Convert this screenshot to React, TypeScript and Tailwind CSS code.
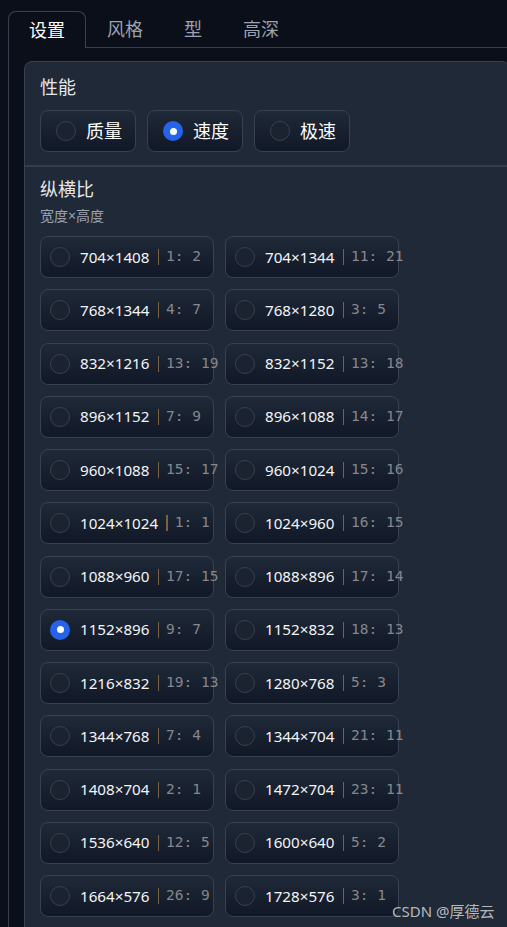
import React from "react";

const ratios: [string, string, boolean?][] = [
  ["704×1408", "1: 2"],
  ["704×1344", "11: 21"],
  ["768×1344", "4: 7"],
  ["768×1280", "3: 5"],
  ["832×1216", "13: 19"],
  ["832×1152", "13: 18"],
  ["896×1152", "7: 9"],
  ["896×1088", "14: 17"],
  ["960×1088", "15: 17"],
  ["960×1024", "15: 16"],
  ["1024×1024", "1: 1"],
  ["1024×960", "16: 15"],
  ["1088×960", "17: 15"],
  ["1088×896", "17: 14"],
  ["1152×896", "9: 7", true],
  ["1152×832", "18: 13"],
  ["1216×832", "19: 13"],
  ["1280×768", "5: 3"],
  ["1344×768", "7: 4"],
  ["1344×704", "21: 11"],
  ["1408×704", "2: 1"],
  ["1472×704", "23: 11"],
  ["1536×640", "12: 5"],
  ["1600×640", "5: 2"],
  ["1664×576", "26: 9"],
  ["1728×576", "3: 1"],
];

function Radio({ checked }: { checked?: boolean }) {
  if (checked) {
    return (
      <span className="flex h-[20px] w-[20px] shrink-0 items-center justify-center rounded-full bg-[#2563eb]">
        <span className="h-[7px] w-[7px] rounded-full bg-white" />
      </span>
    );
  }
  return <span className="h-[20px] w-[20px] shrink-0 rounded-full border border-[#374151] bg-[#1b2230]" />;
}

const font = { fontFamily: '"Noto Sans", "Noto Sans CJK SC", sans-serif' };

export default function App() {
  return (
    <div
      className="relative h-[927px] w-[507px] overflow-hidden bg-[#0b0f19] text-white"
      style={font}
    >
      {/* tabs */}
      <div className="flex pl-[8px] pt-[11px]">
        <div className="flex h-[37px] items-center rounded-t-lg border-x border-t border-[#374151] px-[20px] text-[18px] text-white">
          设置
        </div>
        <div className="flex h-[37px] items-center border-b border-[#374151] px-[21px] text-[18px] text-[#9ca3af]">
          风格
        </div>
        <div className="flex h-[37px] items-center border-b border-[#374151] px-[20px] text-[18px] text-[#9ca3af]">
          型
        </div>
        <div className="flex h-[37px] items-center border-b border-[#374151] px-[21px] text-[18px] text-[#9ca3af]">
          高深
        </div>
        <div className="h-[37px] flex-1 border-b border-[#374151]" />
      </div>

      {/* panel */}
      <div className="ml-[8px] h-[900px] border-l border-[#374151] pl-[15px] pt-[13px]">
        <div className="h-[1000px] w-[486px] overflow-hidden rounded-lg border border-[#374151] bg-[#1f2937]">
          {/* 性能 */}
          <div className="px-[15px] pb-[13px] pt-[12px]">
            <div className="text-[18px] leading-[27px] text-[#e5e7eb]">性能</div>
            <div className="mt-[9px] flex gap-[11px]">
              {[
                ["质量", false],
                ["速度", true],
                ["极速", false],
              ].map(([label, checked]) => (
                <div
                  key={label as string}
                  className="flex h-[42px] w-[96px] items-center gap-[10px] rounded-lg border border-[#374151] bg-gradient-to-b from-[#1f2937] to-[#111827] pl-[15px] text-[18px] text-white"
                >
                  <Radio checked={checked as boolean} />
                  <span>{label as string}</span>
                </div>
              ))}
            </div>
          </div>
          <div className="h-[2px] bg-[#343d4c]" />
          {/* 纵横比 */}
          <div className="px-[15px] pt-[9px]">
            <div className="text-[18px] leading-[27px] text-[#e5e7eb]">纵横比</div>
            <div className="mt-[4px] text-[14px] leading-[18px] text-[#9ca3af]">宽度×高度</div>
            <div className="mt-[11px] grid w-[360px] grid-cols-[174px_174px] gap-x-[11px] gap-y-[11.25px]">
              {ratios.map(([size, r, checked]) => (
                <div
                  key={size}
                  className="flex h-[42px] w-[174px] items-center whitespace-nowrap rounded-lg border border-[#374151] bg-gradient-to-b from-[#1f2937] to-[#111827] pl-[9px]"
                >
                  <Radio checked={checked} />
                  <span className="ml-[10px] shrink-0 text-[15.2px] text-[#f3f4f6]">{size}</span>
                  <span className="ml-[8px] inline-block h-[16px] w-[1.5px] shrink-0 bg-[#7a6240]" />
                  <span
                    className="ml-[7px] shrink-0 text-[14.5px] text-[#85878c]"
                    style={{ fontFamily: '"DejaVu Sans Mono", monospace' }}
                  >
                    {r}
                  </span>
                </div>
              ))}
            </div>
          </div>
        </div>
      </div>

      <div className="absolute left-[392px] top-[900px] text-[15px] text-[#c9cbcf]/90">
        CSDN @厚德云
      </div>
    </div>
  );
}
